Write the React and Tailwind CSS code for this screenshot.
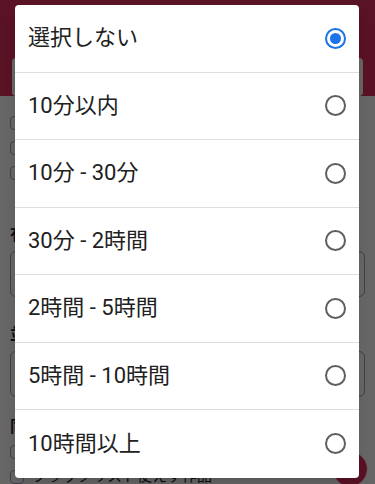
import React, { useState } from 'react';

const options = [
    '選択しない',
    '10分以内',
    '10分 - 30分',
    '30分 - 2時間',
    '2時間 - 5時間',
    '5時間 - 10時間',
    '10時間以上',
];

function Radio({ checked }) {
    return (
        <div
            className={
                checked
                    ? 'flex h-[21px] w-[21px] items-center justify-center rounded-full border-2 border-[#1a73e8]'
                    : 'flex h-[21px] w-[21px] items-center justify-center rounded-full border-2 border-[#5f5f5f]'
            }
        >
            {checked && <div className="h-[11px] w-[11px] rounded-full bg-[#1a73e8]" />}
        </div>
    );
}

function Check({ label }) {
    return (
        <div className="flex h-[25px] items-center gap-2">
            <div className="h-[14px] w-[14px] rounded-sm border border-gray-400 bg-white" />
            <span className="text-[15px] text-gray-800">{label}</span>
        </div>
    );
}

export default function App() {
    const [selected, setSelected] = useState(0);

    return (
        <div className="relative h-[484px] w-[375px] overflow-hidden bg-white font-['Roboto','Noto_Sans_CJK_JP',sans-serif]">
            {/* page behind the dialog */}
            <div className="h-[96px] bg-[#e22e5c] px-[12px] pt-[58px]">
                <div className="h-[38px] rounded bg-white" />
            </div>
            <div className="px-[10px] pt-[14px]">
                <Check label="ショートのみ" />
                <Check label="完結済のみ" />
                <Check label="連載中のみ" />
                <div className="mt-[38px] text-[16px] font-bold text-gray-800">有効な文字数</div>
                <div className="mt-[4px] h-[46px] rounded-md border border-gray-400" />
                <div className="mt-[26px] text-[16px] font-bold text-gray-800">並び替え</div>
                <div className="mt-[4px] h-[46px] rounded-md border border-gray-400" />
                <div className="mt-[18px] text-[16px] font-bold text-gray-800">同一条件</div>
                <Check label="タグを含む作品" />
                <Check label="ブラックリスト使えず作品" />
            </div>
            <div className="absolute right-[8px] top-[452px] h-[34px] w-[34px] rounded-full bg-[#e22e5c]" />

            {/* scrim */}
            <div className="absolute inset-0 bg-black/60" />

            {/* dialog */}
            <div className="absolute left-[15px] top-[5px] w-[344px] overflow-hidden rounded bg-white shadow-lg">
                {options.map((label, i) => (
                    <div
                        key={label}
                        onClick={() => setSelected(i)}
                        className={
                            i === options.length - 1
                                ? 'flex h-[67.5px] cursor-pointer items-center justify-between pl-[13px] pr-[13px]'
                                : 'flex h-[67.5px] cursor-pointer items-center justify-between border-b border-[#dedede] pl-[13px] pr-[13px]'
                        }
                    >
                        <span className="text-[22px] font-normal leading-none text-[#212121]">{label}</span>
                        <Radio checked={selected === i} />
                    </div>
                ))}
            </div>
        </div>
    );
}
